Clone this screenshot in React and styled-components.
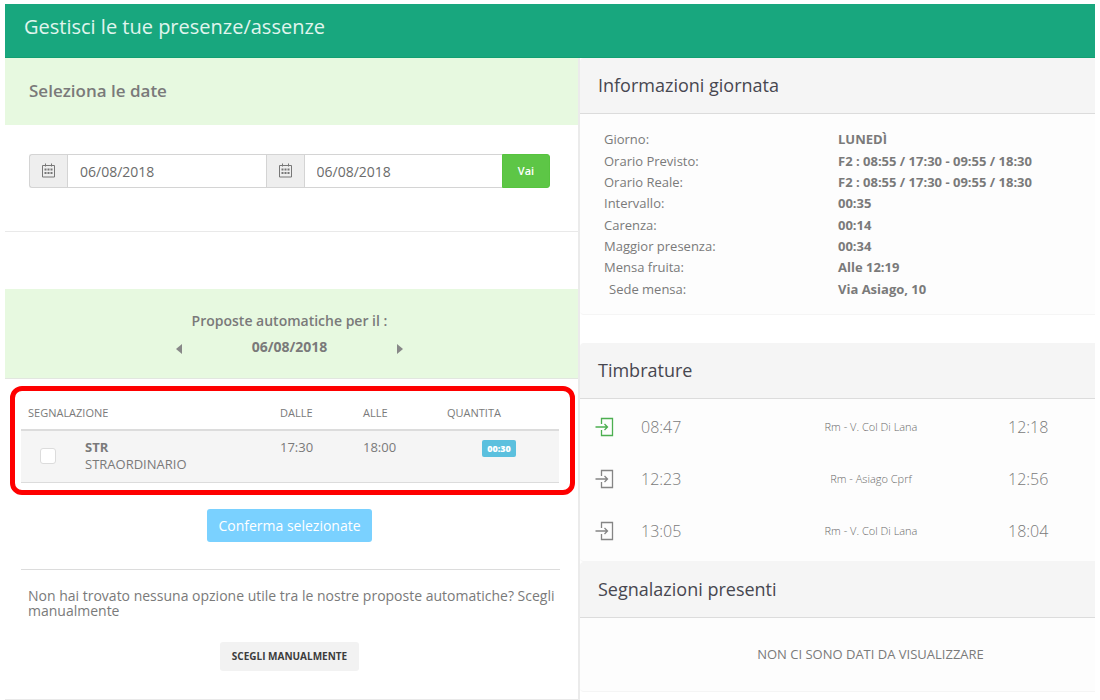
import React from "react";
import styled, { createGlobalStyle } from "styled-components";

const Global = createGlobalStyle`
  *, *::before, *::after { box-sizing: border-box; }
  body {
    margin: 0;
    background: #fff;
    color: #7a7a7a;
    font-family: "Open Sans", "Liberation Sans", sans-serif;
    font-size: 13px;
    line-height: 18px;
  }
  button, input { font-family: inherit; }
`;

const Page = styled.main`
  padding: 4px 5px 0;
`;

const TopBar = styled.header`
  background: #18a77e;
  border-bottom: 1px solid #12a072;
  padding: 9px 19px 16px;
  h1 {
    margin: 0;
    color: #e0f5ee;
    font-size: 20px;
    line-height: 28px;
    font-weight: 400;
  }
`;

const Columns = styled.div`
  display: grid;
  grid-template-columns: minmax(0, 575fr) minmax(0, 515fr);
`;

const LeftColumn = styled.div`
  display: flex;
  flex-direction: column;
  border-right: 2px solid #ebebeb;
`;

const RightColumn = styled.div`
  display: flex;
  flex-direction: column;
`;

const GreenTitle = styled.h2`
  margin: 0;
  padding: 21px 24px 22px;
  background: #e7f9e0;
  color: #7a7a7a;
  font-size: 17px;
  line-height: 24px;
  font-weight: 600;
`;

const DateForm = styled.form`
  display: flex;
  padding: 29px 28px 43px 24px;
  border-bottom: 1px solid #e9e9e9;
  margin-bottom: 57px;
`;

const Addon = styled.label`
  display: flex;
  align-items: center;
  justify-content: center;
  width: 38px;
  height: 34px;
  padding-bottom: 2px;
  background: #eee;
  border: 1px solid #d4d4d4;
  border-width: 1px ${(p) => (p.$first ? "0" : "1px")} 1px ${(p) => (p.$first ? "1px" : "0")};
  border-radius: ${(p) => (p.$first ? "3px 0 0 3px" : "0")};
  color: #777;
`;

const DateInput = styled.input`
  flex: 1 1 0;
  min-width: 0;
  height: 34px;
  padding: 1px 12px;
  border: 1px solid #d4d4d4;
  border-right-width: ${(p) => (p.$last ? "0" : "1px")};
  border-left-width: ${(p) => (p.$last ? "0" : "1px")};
  border-radius: 0;
  background: #fff;
  color: #6b6b6b;
  font-size: 14px;
`;

const GoButton = styled.button`
  width: 48px;
  height: 34px;
  padding: 0 0 2px;
  border: 1px solid #57c33f;
  border-radius: 0 3px 3px 0;
  background: #5dc646;
  color: #fff;
  font-size: 11px;
  font-weight: 600;
`;

const Proposals = styled.div`
  display: flex;
  flex-direction: column;
  align-items: center;
  padding: 22px 4px 19px 0;
  background: #e7f9e0;
  border-bottom: 1px solid #e2e6e0;
  margin-bottom: 7px;
  h3 {
    margin: 0 0 4px;
    font-size: 14px;
    line-height: 20px;
    font-weight: 600;
  }
`;

const DayPicker = styled.div`
  display: flex;
  align-items: center;
  justify-content: space-between;
  width: 232px;
  height: 24px;
  font-size: 14px;
  font-weight: 700;
`;

const ArrowButton = styled.button`
  display: flex;
  padding: 6px 2px 2px;
  border: 0;
  background: none;
  color: #888;
`;

const Highlight = styled.section`
  margin: 0 3px 0 5px;
  padding: 7px 11px 7px 6px;
  border: 5px solid #fe0000;
  border-radius: 12px;
`;

const ProposalTable = styled.table`
  width: 100%;
  table-layout: fixed;
  border-collapse: collapse;
  th {
    height: 32px;
    padding: 0 0 1px 7px;
    border-bottom: 2px solid #dcdcdc;
    font-size: 11px;
    line-height: 16px;
    font-weight: 400;
    text-align: left;
  }
  td {
    height: 52px;
    padding: 8px 0 8px 7px;
    vertical-align: top;
    background: #f5f5f5;
    border-bottom: 1px solid #dcdcdc;
    line-height: 17px;
  }
`;

const Col = styled.col`
  width: ${(p) => p.$width};
`;

const Check = styled.input`
  appearance: none;
  display: block;
  width: 16px;
  height: 16px;
  margin: 9px 0 0 12px;
  border: 1px solid #dcdcdc;
  border-radius: 3px;
  background: #fff;
`;

const Badge = styled.span`
  display: block;
  width: 34px;
  margin-left: 35px;
  margin-top: 1px;
  border-radius: 2px;
  background: #5bc0de;
  color: #fff;
  font-size: 9px;
  line-height: 17px;
  font-weight: 800;
  text-align: center;
`;

const ConfirmButton = styled.button`
  align-self: center;
  height: 33px;
  margin: 14px 4px 27px 0;
  padding: 0 11px;
  border: 0;
  border-radius: 3px;
  background: #7ad1ff;
  color: #fff;
  font-size: 14px;
  font-weight: 400;
`;

const ManualHint = styled.p`
  margin: 0 18px 0 16px;
  padding: 18px 0 24px 7px;
  border-top: 1px solid #dcdcdc;
  font-size: 14px;
  line-height: 15px;
`;

const ManualButton = styled.button`
  align-self: center;
  height: 29px;
  margin: 0 4px 28px 0;
  padding: 0 12px;
  border: 0;
  border-radius: 3px;
  background: #f2f2f2;
  color: #3c3c3c;
  font-size: 10px;
  font-weight: 700;
`;

const BottomLine = styled.hr`
  width: 100%;
  margin: 0;
  border: 0;
  border-top: 1px solid #e9e9e9;
`;

const Panel = styled.section`
  margin-bottom: ${(p) => p.$gap || 0}px;
  background: #fdfdfd;
  border-bottom: 1px solid #f5f5f5;
  border-radius: 4px 0 0 4px;
`;

const PanelTitle = styled.h2`
  margin: 0;
  padding: 13px 18px 14px;
  background: #f5f5f5;
  border-bottom: 1px solid #dcdcdc;
  border-radius: 4px 0 0 0;
  color: #474750;
  font-size: 18px;
  line-height: 28px;
  font-weight: 400;
`;

const InfoTable = styled.table`
  width: 100%;
  height: 171px;
  margin: 15px 0 14px;
  table-layout: fixed;
  border-collapse: collapse;
  th, td {
    padding: 0;
    text-align: left;
    line-height: 21px;
  }
  th {
    width: 258px;
    padding-left: 24px;
    font-weight: 400;
  }
  td { font-weight: 700; }
  tr:last-child th { padding-left: 29px; }
`;

const StampList = styled.ul`
  margin: 0;
  padding: 2px 0 4px;
  list-style: none;
`;

const Stamp = styled.li`
  display: grid;
  grid-template-columns: 46px 100px 1fr 87px;
  align-items: center;
  height: 52px;
  padding-left: 15px;
`;

const Time = styled.time`
  color: #7a7a7a;
  font-size: 16px;
  font-weight: 300;
`;

const Place = styled.span`
  padding-right: 7px;
  color: #6a6a6a;
  font-size: 11px;
  font-weight: 300;
  text-align: center;
`;

const Empty = styled.p`
  margin: 0;
  padding: 27px 0 28px 66px;
  text-align: center;
`;

function CalendarIcon() {
  return (
    <svg width="15" height="15" viewBox="0 0 15 15" fill="none" stroke="currentColor" aria-hidden="true">
      <path d="M1.500 2.500h12v11.500h-12zM4.500 0.500v3M10.500 0.500v3" />
      <path d="M3.500 6.500h2M6.500 6.500h2M9.500 6.500h2M3.500 10h2M6.500 10h2M9.500 10h2" strokeWidth="2" />
    </svg>
  );
}

function LoginIcon({ color }) {
  return (
    <svg width="19" height="20" viewBox="0 0 19 20" fill="none" stroke={color} strokeWidth="1.300" aria-hidden="true">
      <path d="M6.500 7V1.500h11v17h-11V13M0.500 10h12M9.500 7l3 3-3 3" />
    </svg>
  );
}

function Caret({ right }) {
  return (
    <svg width="6" height="10" viewBox="0 0 6 10" fill="currentColor" aria-hidden="true">
      <path d={right ? "M0 0L6 5L0 10z" : "M6 0L0 5L6 10z"} />
    </svg>
  );
}

const info = [
  ["Giorno:", "LUNEDÌ"],
  ["Orario Previsto:", "F2 : 08:55 / 17:30 - 09:55 / 18:30"],
  ["Orario Reale:", "F2 : 08:55 / 17:30 - 09:55 / 18:30"],
  ["Intervallo:", "00:35"],
  ["Carenza:", "00:14"],
  ["Maggior presenza:", "00:34"],
  ["Mensa fruita:", "Alle 12:19"],
  ["Sede mensa:", "Via Asiago, 10"],
];

const stamps = [
  { from: "08:47", place: "Rm - V. Col Di Lana", to: "12:18", color: "#4caf50" },
  { from: "12:23", place: "Rm - Asiago Cprf", to: "12:56", color: "#858585" },
  { from: "13:05", place: "Rm - V. Col Di Lana", to: "18:04", color: "#858585" },
];

export default function App() {
  return (
    <Page>
      <Global />
      <TopBar>
        <h1>Gestisci le tue presenze/assenze</h1>
      </TopBar>
      <Columns>
        <LeftColumn>
          <GreenTitle>Seleziona le date</GreenTitle>
          <DateForm onSubmit={(e) => e.preventDefault()}>
            <Addon $first htmlFor="from" aria-label="Dal"><CalendarIcon /></Addon>
            <DateInput id="from" type="text" defaultValue="06/08/2018" />
            <Addon htmlFor="to" aria-label="Al"><CalendarIcon /></Addon>
            <DateInput $last id="to" type="text" defaultValue="06/08/2018" />
            <GoButton type="submit">Vai</GoButton>
          </DateForm>
          <Proposals>
            <h3>Proposte automatiche per il :</h3>
            <DayPicker>
              <ArrowButton type="button" aria-label="Giorno precedente"><Caret /></ArrowButton>
              <span>06/08/2018</span>
              <ArrowButton type="button" aria-label="Giorno successivo"><Caret right /></ArrowButton>
            </DayPicker>
          </Proposals>
          <Highlight>
            <ProposalTable>
              <colgroup>
                <Col $width="57px" />
                <Col $width="auto" />
                <Col $width="83px" />
                <Col $width="84px" />
                <Col $width="119px" />
              </colgroup>
              <thead>
                <tr>
                  <th colSpan={2}>SEGNALAZIONE</th>
                  <th>DALLE</th>
                  <th>ALLE</th>
                  <th>QUANTITA</th>
                </tr>
              </thead>
              <tbody>
                <tr>
                  <td><Check type="checkbox" aria-label="Seleziona STR" /></td>
                  <td><strong>STR</strong><br />STRAORDINARIO</td>
                  <td>17:30</td>
                  <td>18:00</td>
                  <td><Badge>00:30</Badge></td>
                </tr>
              </tbody>
            </ProposalTable>
          </Highlight>
          <ConfirmButton type="button">Conferma selezionate</ConfirmButton>
          <ManualHint>
            Non hai trovato nessuna opzione utile tra le nostre proposte automatiche? Scegli manualmente
          </ManualHint>
          <ManualButton type="button">SCEGLI MANUALMENTE</ManualButton>
          <BottomLine />
        </LeftColumn>
        <RightColumn>
          <Panel $gap={28}>
            <PanelTitle>Informazioni giornata</PanelTitle>
            <InfoTable>
              <tbody>
                {info.map(([label, value]) => (
                  <tr key={label}>
                    <th scope="row">{label}</th>
                    <td>{value}</td>
                  </tr>
                ))}
              </tbody>
            </InfoTable>
          </Panel>
          <Panel>
            <PanelTitle>Timbrature</PanelTitle>
            <StampList>
              {stamps.map((s) => (
                <Stamp key={s.from}>
                  <LoginIcon color={s.color} />
                  <Time>{s.from}</Time>
                  <Place>{s.place}</Place>
                  <Time>{s.to}</Time>
                </Stamp>
              ))}
            </StampList>
          </Panel>
          <Panel>
            <PanelTitle>Segnalazioni presenti</PanelTitle>
            <Empty>NON CI SONO DATI DA VISUALIZZARE</Empty>
          </Panel>
        </RightColumn>
      </Columns>
    </Page>
  );
}
